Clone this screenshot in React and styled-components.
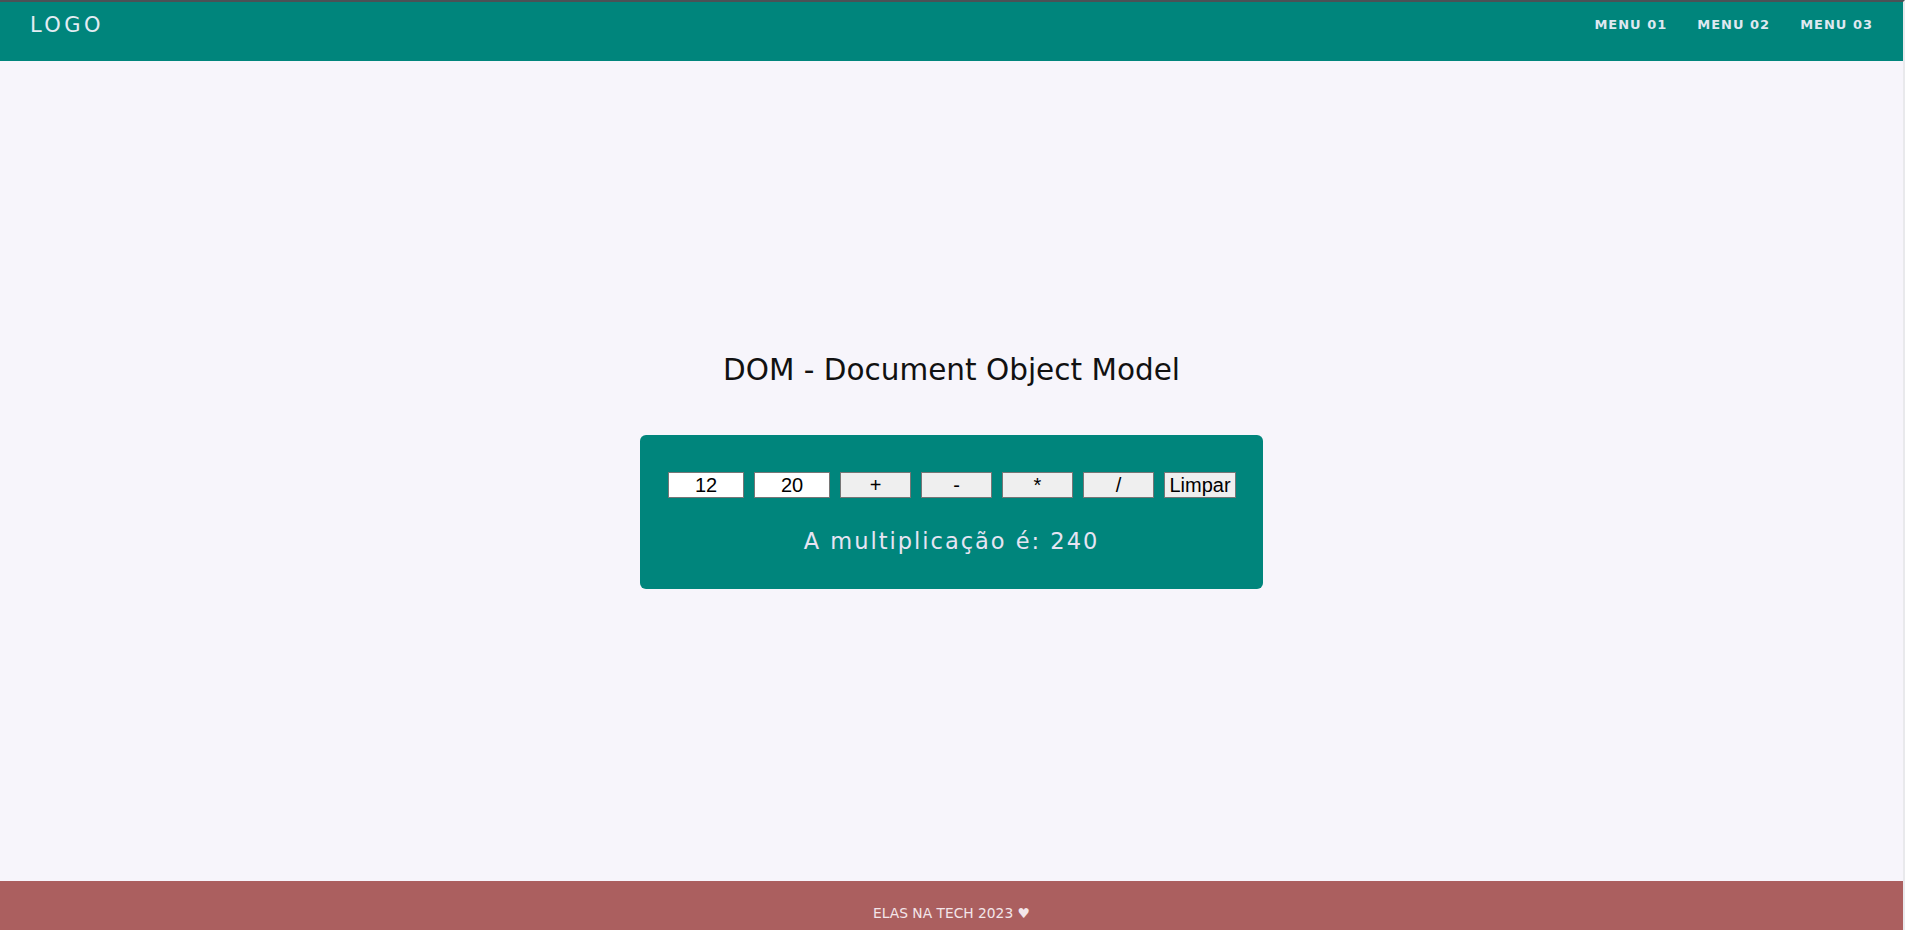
import React, { useState } from "react";
import styled, { createGlobalStyle } from "styled-components";

const GlobalStyle = createGlobalStyle`
  html, body {
    margin: 0;
    padding: 0;
    height: 100%;
  }
  body {
    font-family: "DejaVu Sans", "Liberation Sans", sans-serif;
    background: #f7f5fb;
    overflow: hidden;
  }
  #root {
    height: 100%;
  }
`;

const Page = styled.div`
  display: flex;
  flex-direction: column;
  height: 100vh;
  box-sizing: border-box;
  border-top: 2px solid #4b5156;
  border-right: 2px solid #e9e9ec;
`;

const Header = styled.header`
  display: flex;
  justify-content: space-between;
  align-items: flex-start;
  height: 59px;
  box-sizing: border-box;
  padding: 10px 30px 0 30px;
  background: #00857c;
`;

const Logo = styled.div`
  color: #e3ecf3;
  font-family: "DejaVu Sans", sans-serif;
  font-size: 21px;
  letter-spacing: 3.4px;
  line-height: 26px;
`;

const Nav = styled.nav`
  display: flex;
  gap: 30px;
  padding-top: 5px;
`;

const MenuItem = styled.a`
  color: #dfe8f0;
  font-family: "DejaVu Sans", sans-serif;
  font-size: 13px;
  font-weight: 700;
  letter-spacing: 1px;
  line-height: 16px;
  text-decoration: none;
  cursor: pointer;
`;

const Main = styled.main`
  flex: 1;
  display: flex;
  flex-direction: column;
  align-items: center;
  justify-content: center;
  padding-bottom: 4px;
`;

const Title = styled.h1`
  margin: 3px 0 47px 0;
  color: #111;
  font-family: "DejaVu Sans", sans-serif;
  font-size: 29.5px;
  font-weight: 400;
  line-height: 36px;
`;

const Panel = styled.section`
  width: 623px;
  box-sizing: border-box;
  padding: 37px 0 34px 0;
  background: #00857c;
  border-radius: 6px;
  display: flex;
  flex-direction: column;
  align-items: center;
`;

const Row = styled.div`
  display: flex;
  gap: 10px;
  margin-left: 1px;
`;

const NumberInput = styled.input`
  width: 76px;
  height: 26px;
  box-sizing: border-box;
  padding: 0;
  border: 1px solid #767676;
  background: #fff;
  color: #000;
  font-family: "Liberation Sans", Arial, sans-serif;
  font-size: 20px;
  text-align: center;
  outline: none;
`;

const OpButton = styled.button`
  width: ${(p) => (p.$wide ? "72px" : "71px")};
  height: 26px;
  box-sizing: border-box;
  padding: 0;
  border: 1px solid #767676;
  background: #efefef;
  color: #000;
  font-family: "Liberation Sans", Arial, sans-serif;
  font-size: 20px;
  line-height: 22px;
  cursor: pointer;
`;

const Result = styled.p`
  margin: 29px 0 0 0;
  color: #e6e4f3;
  font-family: "DejaVu Sans", sans-serif;
  font-size: 22.5px;
  letter-spacing: 2px;
  line-height: 28px;
`;

const Footer = styled.footer`
  height: 49px;
  box-sizing: border-box;
  padding-top: 24px;
  background: #ab5f5f;
  color: #f3e6ea;
  font-family: "DejaVu Sans", sans-serif;
  font-size: 13.8px;
  text-align: center;
  line-height: 16px;
`;

export default function App() {
  const [a, setA] = useState("12");
  const [b, setB] = useState("20");
  const [result, setResult] = useState("A multiplicação é: 240");

  const calc = (op) => {
    const x = Number(a);
    const y = Number(b);
    if (op === "+") setResult(`A soma é: ${x + y}`);
    if (op === "-") setResult(`A subtração é: ${x - y}`);
    if (op === "*") setResult(`A multiplicação é: ${x * y}`);
    if (op === "/") setResult(`A divisão é: ${x / y}`);
  };

  const clear = () => {
    setA("");
    setB("");
    setResult("");
  };

  return (
    <>
      <GlobalStyle />
      <Page>
        <Header>
          <Logo>LOGO</Logo>
          <Nav>
            <MenuItem>MENU 01</MenuItem>
            <MenuItem>MENU 02</MenuItem>
            <MenuItem>MENU 03</MenuItem>
          </Nav>
        </Header>
        <Main>
          <Title>DOM - Document Object Model</Title>
          <Panel>
            <Row>
              <NumberInput value={a} onChange={(e) => setA(e.target.value)} />
              <NumberInput value={b} onChange={(e) => setB(e.target.value)} />
              <OpButton onClick={() => calc("+")}>+</OpButton>
              <OpButton onClick={() => calc("-")}>-</OpButton>
              <OpButton onClick={() => calc("*")}>*</OpButton>
              <OpButton onClick={() => calc("/")}>/</OpButton>
              <OpButton $wide onClick={clear}>Limpar</OpButton>
            </Row>
            <Result>{result}</Result>
          </Panel>
        </Main>
        <Footer>ELAS NA TECH 2023 ♥</Footer>
      </Page>
    </>
  );
}
